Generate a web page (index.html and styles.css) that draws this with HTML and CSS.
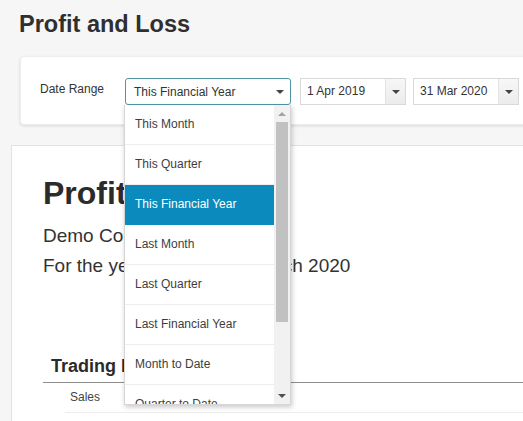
FILE: index.html
```html
<!DOCTYPE html>
<html lang="en">
<head>
<meta charset="utf-8">
<title>Profit and Loss</title>
<link rel="stylesheet" href="styles.css">
</head>
<body>
<div class="page">
  <h1 class="page-title">Profit and Loss</h1>

  <div class="filter-card">
    <span class="filter-label">Date Range</span>
    <div class="select-wrap">
      <div class="select">
        <span class="select-text">This Financial Year</span>
        <span class="caret"></span>
      </div>
      <div class="dropdown">
        <ul class="options">
          <li class="option">This Month</li>
          <li class="option">This Quarter</li>
          <li class="option selected">This Financial Year</li>
          <li class="option">Last Month</li>
          <li class="option">Last Quarter</li>
          <li class="option">Last Financial Year</li>
          <li class="option">Month to Date</li>
          <li class="option">Quarter to Date</li>
        </ul>
        <div class="scrollbar">
          <div class="sb-btn"><span class="sb-arrow up"></span></div>
          <div class="sb-track"><div class="sb-thumb"></div></div>
          <div class="sb-btn"><span class="sb-arrow down"></span></div>
        </div>
      </div>
    </div>
    <div class="date">
      <span class="date-text">1 Apr 2019</span>
      <span class="date-btn"><span class="caret"></span></span>
    </div>
    <div class="date">
      <span class="date-text">31 Mar 2020</span>
      <span class="date-btn"><span class="caret"></span></span>
    </div>
  </div>

  <div class="report">
    <h2 class="report-title">Profit and Loss</h2>
    <p class="report-sub">Demo Company (AU)</p>
    <p class="report-sub">For the year ended 31st March 2020</p>

    <div class="section">
      <h3 class="section-title">Trading Income</h3>
      <div class="row"><span class="row-label">Sales</span></div>
    </div>
  </div>
</div>
</body>
</html>
```

FILE: styles.css
```css
* {
  box-sizing: border-box;
}

html, body {
  margin: 0;
  padding: 0;
}

body {
  width: 523px;
  height: 421px;
  overflow: hidden;
  background: #f6f6f6;
  font-family: "Liberation Sans", Arial, sans-serif;
  color: #333;
}

.page {
  width: 523px;
  height: 421px;
  overflow: hidden;
}

.page-title {
  margin: 0;
  padding: 10px 0 0 19px;
  font-size: 23.5px;
  line-height: 28px;
  font-weight: bold;
  color: #2f2f2f;
}

/* filter card */
.filter-card {
  margin: 18px 0 0 20px;
  width: 540px;
  height: 69px;
  padding: 21px 0 0 19px;
  background: #fff;
  border: 1px solid #eeeeee;
  border-radius: 4px;
  box-shadow: 0 1px 3px rgba(0, 0, 0, 0.12);
  display: flex;
  align-items: flex-start;
}

.filter-label {
  font-size: 12px;
  line-height: 23px;
  color: #333;
  width: 85px;
}

.select-wrap {
  position: relative;
  margin-right: 9px;
}

.select {
  width: 166px;
  height: 27px;
  border: 1px solid #4f95a6;
  border-radius: 3px;
  display: flex;
  align-items: center;
  justify-content: space-between;
  padding: 0 6px 0 8px;
  font-size: 12px;
  color: #333;
  background: #fff;
}

.caret {
  width: 0;
  height: 0;
  border-left: 4px solid transparent;
  border-right: 4px solid transparent;
  border-top: 4px solid #444;
}

.dropdown {
  position: absolute;
  top: 27px;
  left: -1px;
  width: 167px;
  height: 300px;
  background: #fff;
  border: 1px solid #d6d6d6;
  border-top: none;
  box-shadow: 1px 2px 5px rgba(0, 0, 0, 0.22);
  display: flex;
  z-index: 10;
  overflow: hidden;
}

.options {
  list-style: none;
  margin: 0;
  padding: 0;
  flex: 1;
  overflow: hidden;
}

.option {
  height: 40px;
  line-height: 39px;
  padding-left: 10px;
  font-size: 12px;
  color: #3d3d3d;
  border-bottom: 1px solid #eeeeee;
  white-space: nowrap;
}

.option.selected {
  background: #0a8abd;
  color: #fff;
  border-bottom-color: #0a8abd;
}

.scrollbar {
  width: 16px;
  background: #f1f1f1;
  display: flex;
  flex-direction: column;
}

.sb-btn {
  height: 17px;
  display: flex;
  align-items: center;
  justify-content: center;
}

.sb-arrow {
  width: 0;
  height: 0;
  border-left: 4px solid transparent;
  border-right: 4px solid transparent;
}

.sb-arrow.up {
  border-bottom: 4px solid #a3a3a3;
}

.sb-arrow.down {
  border-top: 4px solid #505050;
}

.sb-track {
  flex: 1;
  padding: 0 2px;
}

.sb-thumb {
  height: 200px;
  background: #c1c1c1;
}

.date {
  width: 106px;
  height: 27px;
  margin-right: 7px;
  border: 1px solid #d9d9d9;
  display: flex;
  background: #fff;
}

.date-text {
  flex: 1;
  font-size: 12px;
  line-height: 25px;
  padding-left: 6px;
  color: #333;
}

.date-btn {
  width: 20px;
  border-left: 1px solid #e3e3e3;
  background: linear-gradient(#f7f7f7, #ececec);
  display: flex;
  align-items: center;
  justify-content: center;
}

/* report */
.report {
  margin: 20px 0 0 11px;
  width: 540px;
  height: 300px;
  background: #fff;
  border: 1px solid #e2e2e2;
  padding: 28px 0 0 31px;
}

.report-title {
  margin: 0;
  font-size: 32px;
  line-height: 38px;
  font-weight: bold;
  color: #2b2b2b;
  white-space: nowrap;
}

.report-sub {
  margin: 0;
  font-size: 19px;
  line-height: 30px;
  color: #333;
  white-space: nowrap;
}

.report-sub:first-of-type {
  margin-top: 9px;
}

.section {
  margin-top: 73px;
}

.section-title {
  margin: 0;
  padding: 0 0 4px 8px;
  font-size: 18px;
  line-height: 24px;
  font-weight: bold;
  color: #2b2b2b;
  border-bottom: 1px solid #8c8c8c;
  white-space: nowrap;
}

.row {
  margin-left: 22px;
  height: 30px;
  border-bottom: 1px solid #ececec;
  padding-left: 5px;
}

.row-label {
  font-size: 12px;
  line-height: 29px;
  color: #444;
}
```
